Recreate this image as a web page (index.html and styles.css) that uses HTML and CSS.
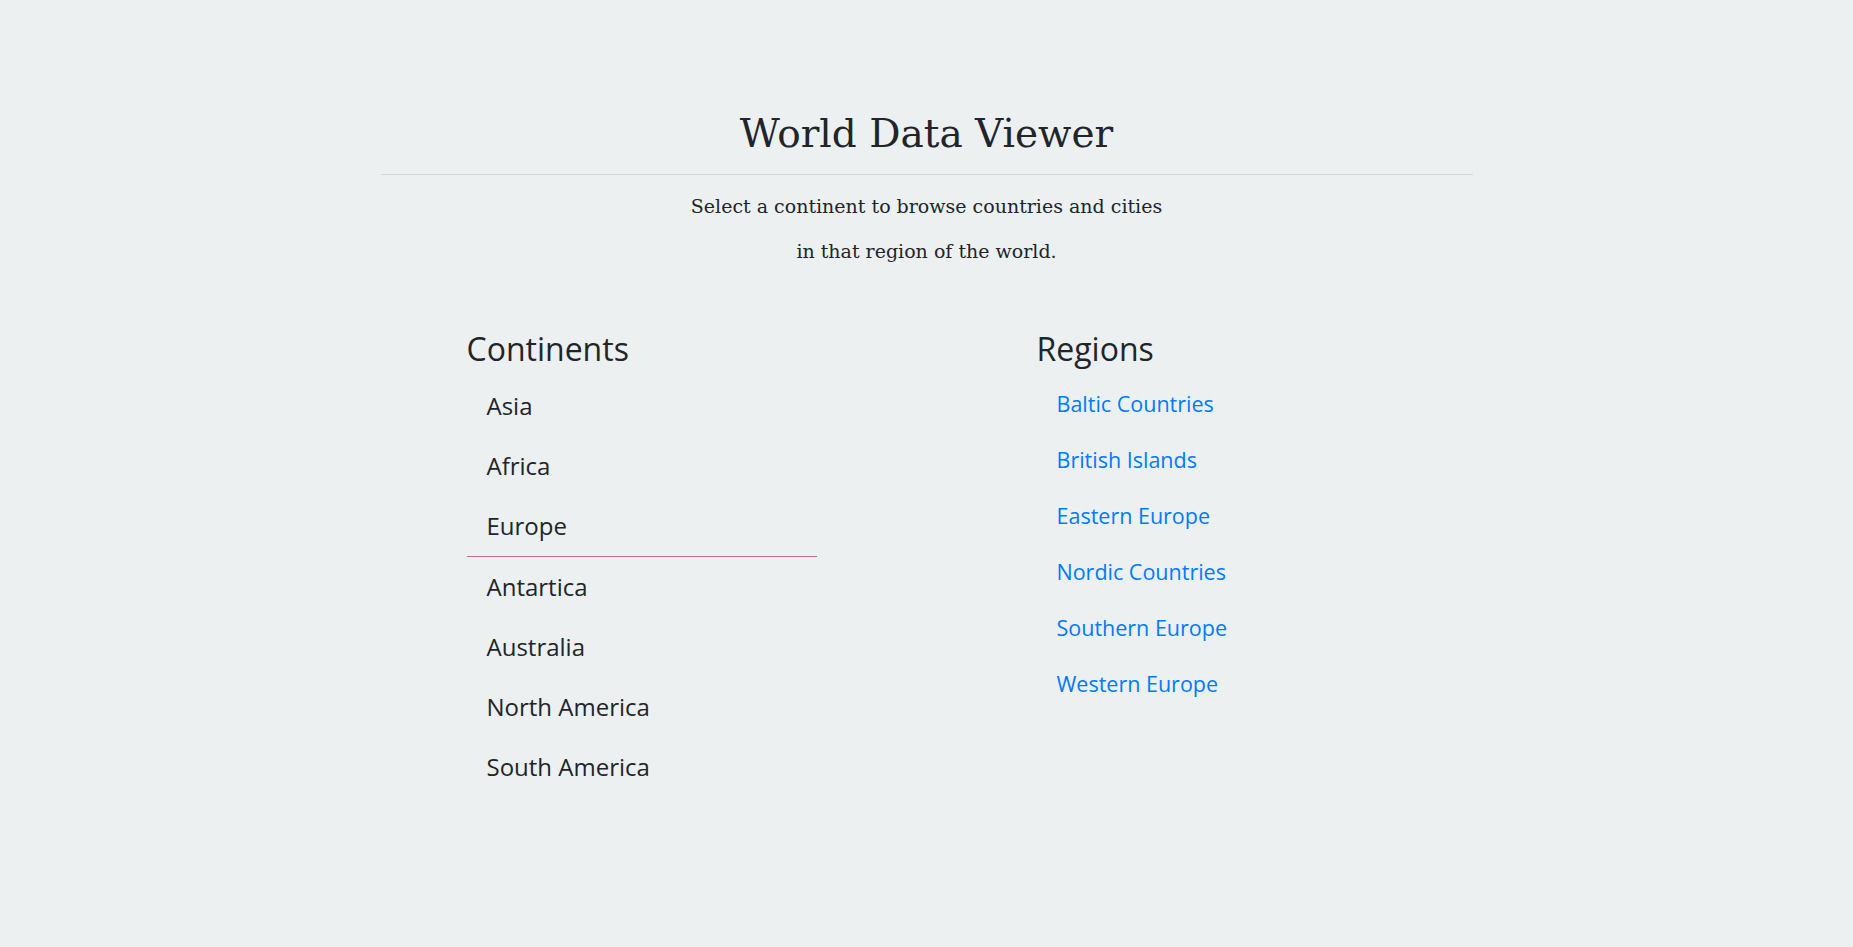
FILE: index.html
```html
<!DOCTYPE html>
<html lang="en">
<head>
<meta charset="utf-8">
<title>World Data Viewer</title>
<link rel="stylesheet" href="styles.css">
</head>
<body>
<div class="container">
  <header class="intro">
    <h1 class="title">World Data Viewer</h1>
    <hr class="rule">
    <p class="lead">Select a continent to browse countries and cities<br>in that region of the world.</p>
  </header>
  <main class="columns">
    <section class="col col-continents">
      <h2 class="col-title">Continents</h2>
      <ul class="continent-list">
        <li class="continent">Asia</li>
        <li class="continent">Africa</li>
        <li class="continent active">Europe</li>
        <li class="continent">Antartica</li>
        <li class="continent">Australia</li>
        <li class="continent">North America</li>
        <li class="continent">South America</li>
      </ul>
    </section>
    <section class="col col-regions">
      <h2 class="col-title">Regions</h2>
      <ul class="region-list">
        <li class="region"><a href="#">Baltic Countries</a></li>
        <li class="region"><a href="#">British Islands</a></li>
        <li class="region"><a href="#">Eastern Europe</a></li>
        <li class="region"><a href="#">Nordic Countries</a></li>
        <li class="region"><a href="#">Southern Europe</a></li>
        <li class="region"><a href="#">Western Europe</a></li>
      </ul>
    </section>
  </main>
</div>
</body>
</html>
```

FILE: styles.css
```css
* { box-sizing: border-box; }

html, body {
  margin: 0;
  padding: 0;
  background: #ecf0f1;
  color: #212529;
  font-family: "Open Sans", "Noto Sans", sans-serif;
}

.container {
  width: 1140px;
  margin: 0 auto;
  padding: 110px 15px 0;
}

.intro {
  width: 1092px;
  margin: 0 auto;
  text-align: center;
}

.title {
  margin: 0;
  font-family: "DejaVu Serif", serif;
  font-weight: 400;
  font-size: 39px;
  line-height: 48px;
}

.rule {
  margin: 16px 0 0;
  border: 0;
  border-top: 1px solid rgba(0, 0, 0, 0.1);
}

.lead {
  margin: 9px 0 0;
  font-family: "DejaVu Serif", serif;
  font-size: 19px;
  line-height: 45px;
}

.columns {
  display: flex;
  padding-left: 95px;
  margin-top: 56px;
  gap: 220px;
}

.col { width: 350px; }

.col-title {
  margin: 0 0 8px;
  font-size: 32px;
  font-weight: 400;
  line-height: 1.2;
}

.continent-list, .region-list {
  list-style: none;
  margin: 0;
  padding: 0;
}

.continent {
  padding: 12px 20px;
  font-size: 24px;
  line-height: 36px;
}

.continent.active {
  border-bottom: 1px solid #c76f8a;
}

.region {
  padding: 12px 20px;
  font-size: 21.5px;
  line-height: 32px;
}

.region a {
  color: #007bff;
  text-decoration: none;
}
```
